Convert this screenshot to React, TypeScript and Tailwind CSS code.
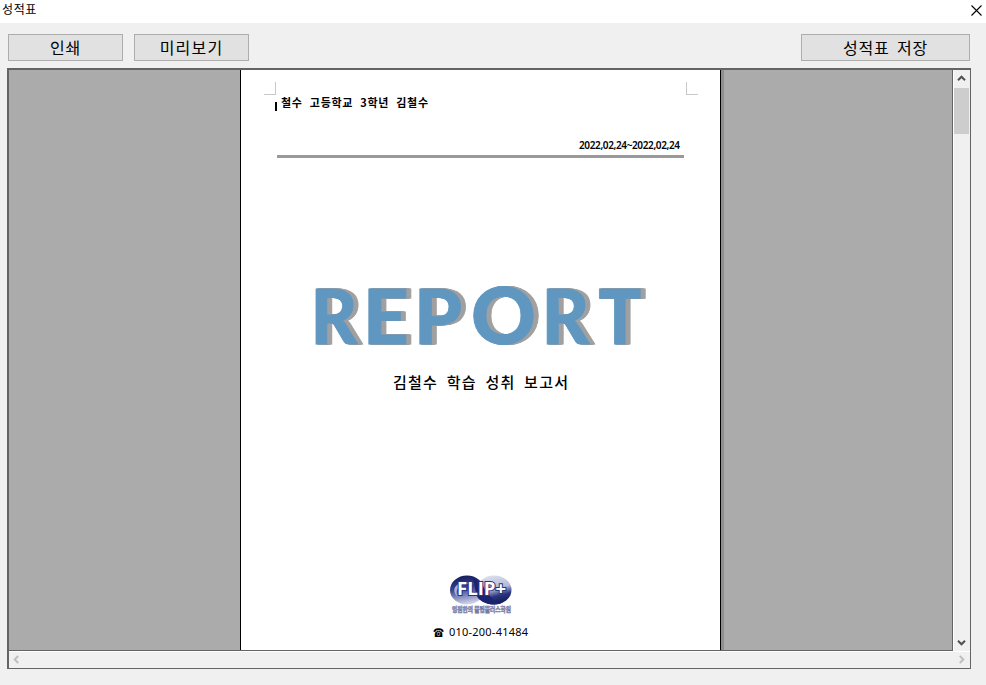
const ui = "[font-family:'Noto_Sans_CJK_KR','Liberation_Sans',sans-serif]";

function Button({ label, width, spacing }: { label: string; width: string; spacing: string }) {
  return (
    <button className={`flex h-[27px] items-center justify-center border border-[#adadad] bg-[#e1e1e1] pb-[2px] text-[16px] leading-none text-black ${width} ${spacing}`}>
      <span>{label}</span>
    </button>
  );
}

function Chevron({ d, color }: { d: string; color: string }) {
  return (
    <svg width="9" height="9" viewBox="0 0 9 9" fill="none" stroke={color} strokeWidth="2" className="block">
      <path d={d} />
    </svg>
  );
}

const letters = [
  { c: 'R', x: 310.5, w: 47, y: 61.5, size: 77 },
  { c: 'E', x: 362.7, w: 46, y: 61.5, size: 77 },
  { c: 'P', x: 414, w: 48, y: 61.5, size: 77 },
  { c: 'O', x: 471, w: 65, y: 62, size: 79 },
  { c: 'R', x: 541.5, w: 48, y: 61.5, size: 77 },
  { c: 'T', x: 598.3, w: 43, y: 61.5, size: 77 },
];

function ReportTitle() {
  return (
    <svg
      width="350"
      height="100"
      viewBox="-4 -20 350 100"
      className="block overflow-visible [font-family:'Lato',sans-serif] font-black [filter:drop-shadow(1px_0_0_#a0a0a0)_drop-shadow(2px_0_0_#a0a0a0)_drop-shadow(2px_0_0_#a0a0a0)]"
    >
      <g fill="#6097c1" stroke="#6097c1" strokeWidth="0.8">
        {letters.map((l, i) => (
          <text key={i} x={l.x - 310} y={l.y} fontSize={l.size} textLength={l.w} lengthAdjust="spacingAndGlyphs">
            {l.c}
          </text>
        ))}
      </g>
    </svg>
  );
}

function Logo() {
  return (
    <svg width="66" height="42" viewBox="0 0 66 42" className="block overflow-visible">
      <defs>
        <linearGradient id="navy" x1="0.3" y1="0" x2="0.5" y2="1">
          <stop offset="0" stopColor="#141a5c" />
          <stop offset="0.45" stopColor="#3a4690" />
          <stop offset="1" stopColor="#d5d9ee" />
        </linearGradient>
        <linearGradient id="silver" x1="0.4" y1="0" x2="0.7" y2="1">
          <stop offset="0" stopColor="#dcdfee" />
          <stop offset="0.45" stopColor="#b4b9d8" />
          <stop offset="0.7" stopColor="#2a357f" />
          <stop offset="1" stopColor="#101650" />
        </linearGradient>
      </defs>
      <ellipse cx="46" cy="16" rx="17.5" ry="14.5" fill="url(#silver)" />
      <ellipse cx="19" cy="16" rx="17" ry="14.5" fill="url(#navy)" />
      <path d="M24 3C33 5 38 20 46 26C50 29 54 29 57 27C49 33 36 31 30 24C26 18 28 10 24 3Z" fill="#1b256f" />
      <path d="M8 12C12 7 20 7 26 10C20 9 14 10 11 13C8 16 8 20 10 23C6 20 5 15 8 12Z" fill="#aab0d4" />
      <text x="9" y="21" textLength="49" lengthAdjust="spacingAndGlyphs" className="[font-family:'Open_Sans',sans-serif] text-[18px] font-bold" stroke="#29347f" strokeWidth="2" paintOrder="stroke" fill="#fff">
        FLIP+
      </text>
      <text x="4" y="38" textLength="59" lengthAdjust="spacingAndGlyphs" className="[font-family:'Noto_Sans_CJK_KR',sans-serif] text-[7px] font-bold" fill="#c9ccdf" stroke="#737aa6" strokeWidth="0.6">
        영원한의 플립플러스학원
      </text>
    </svg>
  );
}

function Page() {
  return (
    <div className="flex h-full w-[481px] shrink-0 flex-col border-x border-black bg-white pr-[22px] pl-[23px]">
      <div className="flex shrink-0 justify-between pt-[12px]">
        <div className="h-[13px] w-[12px] border-r border-b border-[#c8c8c8]" />
        <div className="h-[13px] w-[12px] border-b border-l border-[#c8c8c8]" />
      </div>
      <div className="flex h-[16px] items-center pl-[11px]">
        <div className="mt-[7px] h-[9px] w-[2px] bg-black" />
        <svg width="156" height="16" className="block [font-family:'Noto_Sans_CJK_KR',sans-serif] text-[11px] font-bold">
          <text x="4" y="12" textLength="147" wordSpacing="4">철수 고등학교 3학년 김철수</text>
        </svg>
      </div>
      <div className="mt-[25px] flex h-[19px] justify-end pr-[17px]">
        <svg width="104" height="19" className="block [font-family:'Noto_Sans',sans-serif] text-[10px] font-semibold">
          <text x="2" y="13" textLength="101">2022,02,24~2022,02,24</text>
        </svg>
      </div>
      <div className="ml-[13px] h-[3px] w-[407px] shrink-0 bg-[#999]" />
      <div className="mt-[104px] ml-[42px]">
        <ReportTitle />
      </div>
      <div className="mt-[8px] ml-[126px]">
        <svg width="184" height="24" className="block [font-family:'Noto_Sans_CJK_KR',sans-serif] text-[15px] font-medium">
          <text x="3" y="17.5" textLength="175" wordSpacing="4">김철수 학습 성취 보고서</text>
        </svg>
      </div>
      <div className="mt-[180px] ml-[184px]">
        <Logo />
      </div>
      <div className="mt-[9px] ml-[166px]">
        <svg width="104" height="18" className="block [font-family:'Noto_Sans',sans-serif] text-[11px]">
          <text x="3" y="12" textLength="11" lengthAdjust="spacingAndGlyphs" className="[font-family:'DejaVu_Sans',sans-serif] text-[12px]">☎</text>
          <text x="19" y="11" textLength="79">010-200-41484</text>
        </svg>
      </div>
    </div>
  );
}

export default function App() {
  return (
    <div className={`flex h-[685px] w-[986px] flex-col overflow-hidden bg-[#f0f0f0] text-black ${ui}`}>
      <header className="flex h-[23px] shrink-0 items-center justify-between bg-white pr-[4px] pl-[2px]">
        <span className="-mt-[5px] text-[12px] leading-none tracking-[0.6px]">성적표</span>
        <svg width="11" height="11" viewBox="0 0 11 11" stroke="#000" strokeWidth="1.1" className="mt-[-3px] block">
          <path d="M.5 .5L10.5 10.5M10.5 .5L.5 10.5" />
        </svg>
      </header>
      <div className="mt-[11px] ml-[8px] flex w-[962px] shrink-0 gap-[11px]">
        <Button label="인쇄" width="w-[115px]" spacing="tracking-[0.8px]" />
        <Button label="미리보기" width="w-[115px]" spacing="tracking-[1.2px]" />
        <div className="flex-1" />
        <Button label="성적표 저장" width="w-[169px]" spacing="tracking-[0.8px] [word-spacing:3px]" />
      </div>
      <main className="mt-[7px] ml-[7px] flex h-[601px] w-[964px] shrink-0 flex-col border-t-2 border-r border-b border-l-2 border-[#646464]">
        <div className="flex h-[581px] shrink-0">
          <div className="flex w-[944px] overflow-hidden border-r border-b border-[#646464] bg-[#ababab] pl-[231px]">
            <Page />
            <div className="w-[3px] bg-[#8f8f8f]" />
          </div>
          <div className="flex w-[17px] flex-col items-center border-l border-white pr-px">
            <div className="flex h-[18px] items-center pb-px"><Chevron d="M1 6.2L4.5 2.7L8 6.2" color="#505050" /></div>
            <div className="h-[46px] w-[15px] bg-[#cdcdcd]" />
            <div className="mt-auto flex h-[17px] items-center"><Chevron d="M1 2.8L4.5 6.3L8 2.8" color="#505050" /></div>
          </div>
        </div>
        <div className="flex h-[17px] items-center justify-between border-t border-white pr-[4px] pb-px pl-[3px]">
          <Chevron d="M6.2 1L2.7 4.5L6.2 8" color="#bfbfbf" />
          <Chevron d="M2.8 1L6.3 4.5L2.8 8" color="#bfbfbf" />
        </div>
      </main>
    </div>
  );
}
